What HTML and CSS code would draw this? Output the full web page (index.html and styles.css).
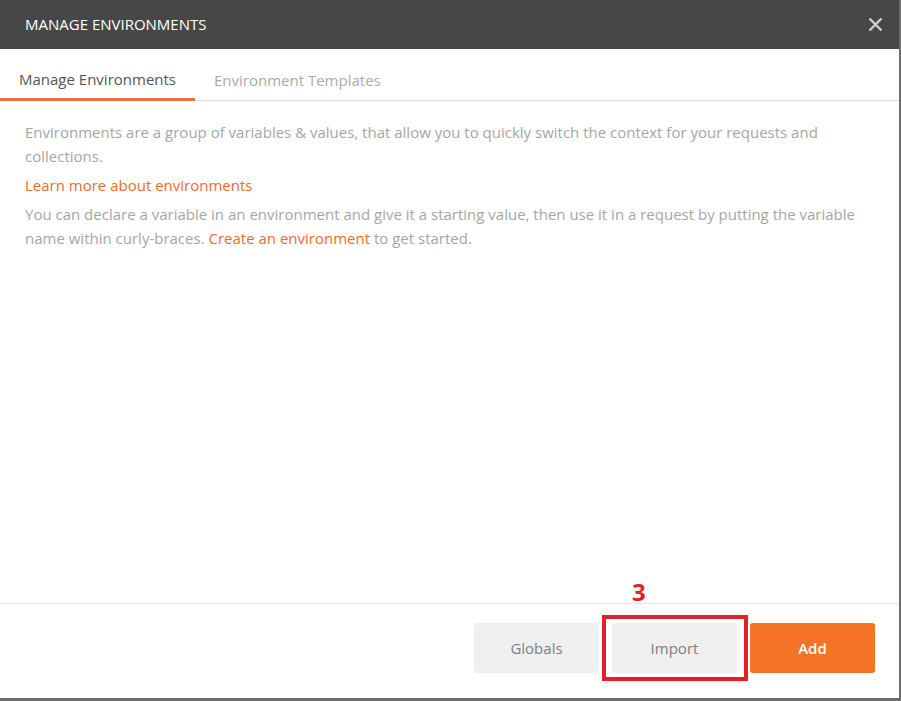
FILE: index.html
```html
<!DOCTYPE html>
<html lang="en">
<head>
  <meta charset="UTF-8">
  <title>Manage Environments</title>
  <link rel="stylesheet" href="styles.css">
</head>
<body>

  <div class="modal">
    <div class="modal-header">
      <span class="modal-title">MANAGE ENVIRONMENTS</span>
      <button class="close-btn" aria-label="Close">
        <svg width="15" height="15" viewBox="0 0 15 15">
          <path d="M1.5 1.5 L13.5 13.5 M13.5 1.5 L1.5 13.5" stroke="#cfcfcf" stroke-width="2.4" />
        </svg>
      </button>
    </div>

    <div class="tabs">
      <div class="tab active">Manage Environments</div>
      <div class="tab">Environment Templates</div>
    </div>

    <div class="modal-body">
      <p>Environments are a group of variables &amp; values, that allow you to quickly switch the context for your requests and collections.</p>
      <p><a href="#">Learn more about environments</a></p>
      <p>You can declare a variable in an environment and give it a starting value, then use it in a request by putting the variable name within curly-braces. <a href="#">Create an environment</a> to get started.</p>
    </div>

    <div class="modal-footer">
      <button class="btn btn-grey">Globals</button>
      <div class="marked">
        <span class="step-num">3</span>
        <button class="btn btn-grey">Import</button>
      </div>
      <button class="btn btn-orange">Add</button>
    </div>
  </div>

</body>
</html>
```

FILE: styles.css
```css
body {
  margin: 0;
  background-color: #6e6e6e;
  font-family: 'Open Sans', sans-serif;
}

.modal {
  width: 899px;
  height: 698px;
  background-color: #fff;
  display: flex;
  flex-direction: column;
}

.modal-header {
  height: 49px;
  background-color: #474747;
  display: flex;
  align-items: center;
  justify-content: space-between;
  padding: 0 16px 0 25px;
}

.modal-title {
  color: #fff;
  font-size: 15px;
  margin-top: -1px;
}

.close-btn {
  background: none;
  border: none;
  padding: 0;
  display: flex;
  cursor: pointer;
}

.tabs {
  display: flex;
  height: 51px;
  border-bottom: 1px solid #dcdcdc;
}

.tab {
  padding: 11px 19px 0;
  font-size: 15px;
  color: #ababab;
  display: flex;
  align-items: center;
}

.tab.active {
  color: #555;
  border-bottom: 3px solid #e8733a;
  margin-bottom: -1px;
}

.modal-body {
  flex: 1;
  padding: 19px 25px 0;
}

.modal-body p {
  margin: 0 0 5px;
  font-size: 15px;
  line-height: 24px;
  color: #a6a6a6;
}

.modal-body a {
  color: #ee6d2c;
  text-decoration: none;
}

.modal-footer {
  border-top: 1px solid #e6e6e6;
  padding: 19px 24px 25px;
  display: flex;
  justify-content: flex-end;
  gap: 13px;
}

.btn {
  width: 125px;
  height: 50px;
  border: none;
  border-radius: 3px;
  font-family: 'Open Sans', sans-serif;
  font-size: 15px;
  cursor: pointer;
}

.btn-grey {
  background-color: #efefef;
  color: #808080;
}

.btn-orange {
  background-color: #f47325;
  color: #fff;
  font-weight: 600;
}

.marked {
  position: relative;
  display: flex;
}

/* red annotation box around Import */
.marked::after {
  content: "";
  position: absolute;
  left: -10px;
  top: -8px;
  right: -11px;
  bottom: -8px;
  border: 4px solid #e3202a;
}

.step-num {
  position: absolute;
  left: 20px;
  top: -48px;
  color: #e3202a;
  font-size: 24px;
  font-weight: bold;
}
```
